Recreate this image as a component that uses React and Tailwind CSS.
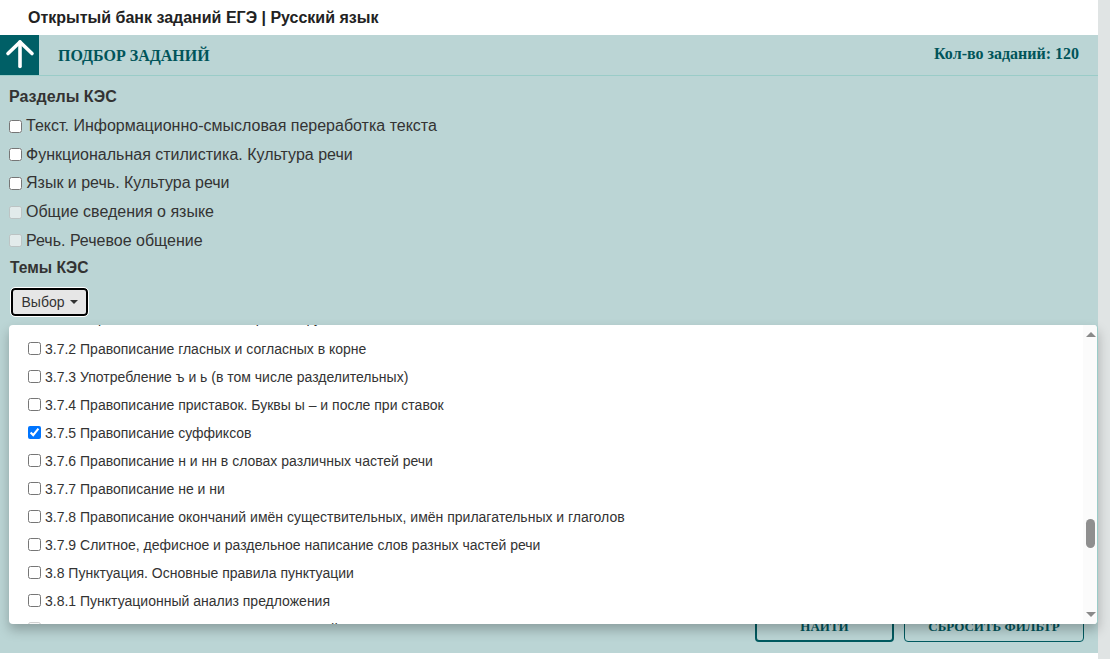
const sans = { fontFamily: '"Liberation Sans", Arial, sans-serif' };

const sections = [
  ["Текст. Информационно-смысловая переработка текста", false],
  ["Функциональная стилистика. Культура речи", false],
  ["Язык и речь. Культура речи", false],
  ["Общие сведения о языке", true],
  ["Речь. Речевое общение", true],
];

const topics = [
  ["3.7.2 Правописание гласных и согласных в корне", false, false],
  ["3.7.3 Употребление ъ и ь (в том числе разделительных)", false, false],
  ["3.7.4 Правописание приставок. Буквы ы – и после при ставок", false, false],
  ["3.7.5 Правописание суффиксов", true, false],
  ["3.7.6 Правописание н и нн в словах различных частей речи", false, false],
  ["3.7.7 Правописание не и ни", false, false],
  ["3.7.8 Правописание окончаний имён существительных, имён прилагательных и глаголов", false, false],
  ["3.7.9 Слитное, дефисное и раздельное написание слов разных частей речи", false, false],
  ["3.8 Пунктуация. Основные правила пунктуации", false, false],
  ["3.8.1 Пунктуационный анализ предложения", false, false],
  ["3.8.2 Знаки препинания в сложносочинённой", false, true],
];

export default function App() {
  return (
    <div className="flex w-[1110px] h-[659px] overflow-hidden bg-white text-[#333333]" style={sans}>
      <div className="relative w-[1098px] shrink-0">
        <div className="h-[35px] pl-[28px] flex items-center text-[16px] font-bold text-[#222222]">
          Открытый банк заданий ЕГЭ | Русский язык
        </div>
        <div className="h-[618px] bg-[#bbd5d5] flex flex-col">
          <div className="h-[41px] flex items-stretch border-b border-[#9accc8] font-['Liberation_Serif',serif] font-bold text-[#00545a]">
            <div className="w-[39px] bg-[#005f66] flex items-center justify-center pb-[2px]">
              <svg width="30" height="30" viewBox="0 0 30 30" fill="none" stroke="white" strokeWidth="3.6" strokeLinecap="round" strokeLinejoin="round">
                <path d="M15 27.5V3" />
                <path d="M3 14.5 15 3l12 11.5" />
              </svg>
            </div>
            <div className="ml-[19px] flex items-center text-[16px] pt-[1px]">ПОДБОР ЗАДАНИЙ</div>
            <div className="ml-auto mr-[19px] flex items-center text-[16px] pb-[2px]">Кол-во заданий: 120</div>
          </div>
          <div className="pl-[9px] pt-[11px] text-[16px]">
            <div className="font-bold h-[20px] leading-[20px]">Разделы КЭС</div>
            <div className="flex flex-col mt-[5px]">
              {sections.map(([label, disabled]) => (
                <label key={label} className="flex items-center h-[28.6px]">
                  <input type="checkbox" disabled={disabled} className="w-[13px] h-[13px] m-0 mr-[4.5px] -ml-[0.5px]" />
                  <span>{label}</span>
                </label>
              ))}
            </div>
            <div className="font-bold h-[20px] leading-[20px] ml-px mt-[3.5px] text-[15.6px]">Темы КЭС</div>
            <button className="mt-[10px] ml-[2px] w-[77px] h-[28px] flex items-center justify-center gap-[5px] bg-[#e6e6e6] border-2 border-black rounded-[4px] outline outline-1 outline-white text-[14px] text-[#333333]">
              Выбор
              <span className="w-0 h-0 border-x-[4px] border-x-transparent border-t-[4px] border-t-[#333333]" />
            </button>
          </div>
          <div className="mt-auto mb-[11px] pr-[14px] flex justify-end gap-[10px] font-['Liberation_Serif',serif] font-bold text-[13px] text-[#00545a]">
            <button className="w-[139px] h-[30px] border-2 border-[#005a60] rounded-[4px] flex items-center justify-center">НАЙТИ</button>
            <button className="w-[180px] h-[30px] border border-[#005a60] rounded-[4px] flex items-center justify-center">СБРОСИТЬ ФИЛЬТР</button>
          </div>
        </div>

        <div className="absolute left-[9px] top-[325px] w-[1089px] h-[299px] bg-white rounded-[4px] shadow-[0_6px_12px_rgba(0,0,0,0.25)] border-r border-[#9accc8] overflow-hidden flex">
          <div className="flex-1 overflow-hidden pl-[19px] text-[14px] text-[#333333]">
            <div className="mt-[-21px] h-[28px] flex items-center pl-[17px] whitespace-nowrap">
              3.7.1 Нормы написания слов и правила русского
            </div>
            <div className="mt-[3px] flex flex-col">
              {topics.map(([label, checked, disabled]) => (
                <label key={label} className="flex items-center h-[28px] shrink-0">
                  <input type="checkbox" defaultChecked={checked} disabled={disabled} className="w-[13px] h-[13px] m-0 mr-[4px] -mt-[2px]" />
                  <span>{label}</span>
                </label>
              ))}
            </div>
          </div>
          <div className="relative w-[14px] bg-[#fbfbfb] shrink-0">
            <div className="absolute left-[3px] top-[7px] w-0 h-0 border-x-[5px] border-x-transparent border-b-[5px] border-b-[#8a8a8a]" />
            <div className="absolute left-[3px] top-[194px] w-[9px] h-[29px] rounded-[5px] bg-[#8f8f8f]" />
            <div className="absolute left-[3px] bottom-[7px] w-0 h-0 border-x-[5px] border-x-transparent border-t-[5px] border-t-[#8a8a8a]" />
          </div>
        </div>
      </div>
      <div className="w-[12px] bg-[#e0e4e4]" />
    </div>
  );
}
